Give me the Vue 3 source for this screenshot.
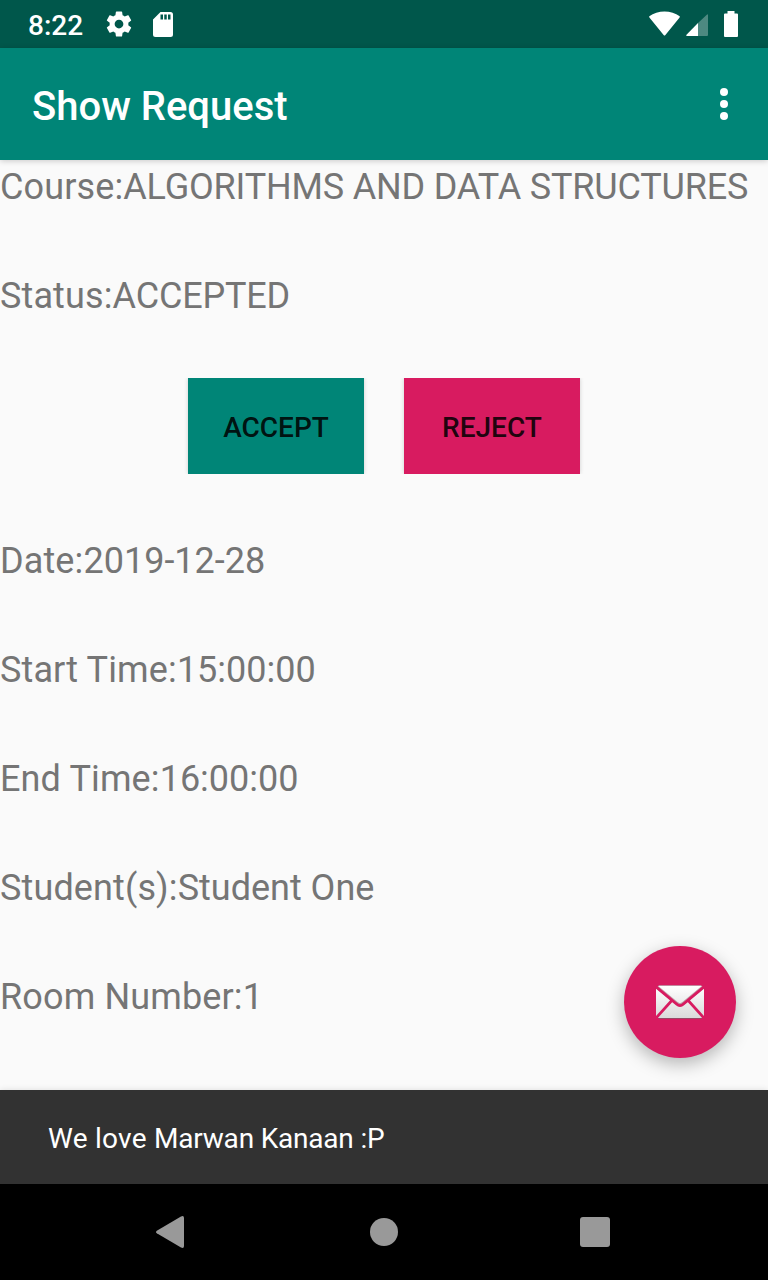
<script setup>
const summary = [
  { label: 'Course:', value: 'ALGORITHMS AND DATA STRUCTURES', caps: true },
  { label: 'Status:', value: 'ACCEPTED', caps: true },
]

const requestDetails = [
  { label: 'Date:', value: '2019-12-28' },
  { label: 'Start Time:', value: '15:00:00' },
  { label: 'End Time:', value: '16:00:00' },
  { label: 'Student(s):', value: 'Student One' },
  { label: 'Room Number:', value: '1' },
]
</script>

<template>
  <div class="screen">
    <header class="status-bar">
      <span class="clock">8:22</span>
      <svg class="gear" width="30" height="30" viewBox="0 0 24 24">
        <path fill="#fff" d="M19.43 12.98c.04-.32.07-.64.07-.98s-.03-.66-.07-.98l2.11-1.65c.19-.15.24-.42.12-.64l-2-3.46c-.12-.22-.39-.3-.61-.22l-2.49 1c-.52-.4-1.08-.73-1.69-.98l-.38-2.65C14.46 2.18 14.25 2 14 2h-4c-.25 0-.46.18-.49.42l-.38 2.65c-.61.25-1.17.59-1.69.98l-2.49-1c-.23-.09-.49 0-.61.22l-2 3.46c-.13.22-.07.49.12.64l2.11 1.65c-.04.32-.07.65-.07.98s.03.66.07.98l-2.11 1.65c-.19.15-.24.42-.12.64l2 3.46c.12.22.39.3.61.22l2.49-1c.52.4 1.08.73 1.69.98l.38 2.65c.03.24.24.42.49.42h4c.25 0 .46-.18.49-.42l.38-2.65c.61-.25 1.17-.59 1.69-.98l2.49 1c.23.09.49 0 .61-.22l2-3.46c.12-.22.07-.49-.12-.64l-2.11-1.65zM12 15.5c-1.93 0-3.5-1.57-3.5-3.5s1.57-3.5 3.5-3.5 3.5 1.57 3.5 3.5-1.57 3.5-3.5 3.5z" />
      </svg>
      <svg class="sd-card" width="20" height="25" viewBox="0 0 20 25">
        <path fill="#fff" fill-rule="evenodd" d="M7.5 0H17.5A2.5 2.5 0 0 1 20 2.5V22.5A2.5 2.5 0 0 1 17.5 25H2.5A2.5 2.5 0 0 1 0 22.5V7.5ZM7.5 2.5V7.5H10V2.5ZM11.25 2.5V7.5H13.75V2.5ZM15 2.5V7.5H17.5V2.5Z" />
      </svg>
      <div class="indicators">
        <svg class="wifi" width="32" height="25" viewBox="0 0 32 25">
          <path fill="#fff" d="M1.3 5.2C9.5-1.1 23.500-1.100 31.700 5.200Q32 6 31.400 6.700L17.400 24Q16.500 25 15.600 24L1.600 6.700Q1 6 1.300 5.200Z" />
        </svg>
        <svg class="signal" width="22" height="22" viewBox="0 0 22 22">
          <path fill="#fff" fill-opacity=".3" d="M12 22H21Q22 22 22 21V1Q22-.5 20.8.7L12 9Z" />
          <path fill="#fff" d="M.5 20.8L12 9V22H.9Q-.3 21.9 .5 20.8Z" />
        </svg>
        <svg class="battery" width="14" height="26" viewBox="0 0 14 26">
          <path fill="#fff" d="M3.500 0H10.500V2.500H13Q14 2.500 14 3.500V25Q14 26 13 26H1Q0 26 0 25V3.500Q0 2.500 1 2.500H3.500Z" />
        </svg>
      </div>
    </header>

    <div class="app-bar">
      <h1>Show Request</h1>
      <svg class="overflow" width="8" height="32" viewBox="0 0 8 32">
        <circle cx="4" cy="4" r="4" fill="#fff" />
        <circle cx="4" cy="16" r="4" fill="#fff" />
        <circle cx="4" cy="28" r="4" fill="#fff" />
      </svg>
    </div>

    <main class="content">
      <p v-for="row in summary" :key="row.label"><span class="label">{{ row.label }}</span><span :class="{ caps: row.caps }">{{ row.value }}</span></p>
      <div class="actions">
        <button class="accept">ACCEPT</button>
        <button class="reject">REJECT</button>
      </div>
      <p v-for="row in requestDetails" :key="row.label"><span class="label">{{ row.label }}</span><span>{{ row.value }}</span></p>

      <button class="fab" aria-label="Email">
        <svg width="48" height="34" viewBox="0 0 48 34">
          <defs>
            <linearGradient id="paper" x1="0" y1="0" x2="0" y2="1">
              <stop offset="0" stop-color="#fff" />
              <stop offset="1" stop-color="#dadada" />
            </linearGradient>
          </defs>
          <rect x="2.5" y="32.6" width="43" height="1.3" fill="#8f5268" />
          <rect x="2.5" y="0" width="43" height="1.2" fill="#c28a9f" />
          <rect x="0" y="1" width="48" height="32" fill="url(#paper)" />
          <path fill="none" stroke="#8f3d58" stroke-width="3.2" d="M0 1.200L20.500 18.200Q24 21.600 27.500 18.200L48 1.200" opacity=".5" />
          <path fill="none" stroke="#d81b60" stroke-width="2.7" d="M0 1.900L20.500 19Q24 22.300 27.500 19L48 1.900M15.800 15.500L.5 32.500M32.200 15.500L47.500 32.500" />
          <path fill="#d81b60" d="M0 0H2.500L0 3.500ZM48 0H45.500L48 3.500ZM0 34V31L2.500 34ZM48 34V31L45.500 34Z" />
        </svg>
      </button>
    </main>

    <div class="snackbar"><span class="opening">We love </span><span class="name">Marwan Kanaan :P</span></div>

    <nav class="nav-bar">
      <svg class="back" width="28" height="32" viewBox="0 0 28 32">
        <path fill="#999" d="M.8 14.700L25 .5Q28-.8 28 2V30Q28 32.800 25 31.500L.8 17.300Q-.8 16 .8 14.700Z" />
      </svg>
      <span class="home"></span>
      <span class="recents"></span>
    </nav>
  </div>
</template>

<style>
body {
  margin: 0;
}
</style>

<style scoped>
.screen {
  width: 768px;
  height: 1280px;
  display: flex;
  flex-direction: column;
  overflow: hidden;
  background: #fafafa;
  font-family: Roboto, sans-serif;
}

.status-bar {
  height: 48px;
  flex: none;
  box-sizing: border-box;
  display: flex;
  align-items: center;
  padding: 0 30px 0 28px;
  background: #00574b;
  color: #fff;
}

.clock {
  width: 76px;
  font-size: 28px;
  font-weight: 500;
  line-height: 34px;
  padding-top: 4px;
}

.sd-card {
  margin: 1px 0 0 19px;
}

.indicators {
  margin-left: auto;
  display: flex;
  align-items: flex-end;
}

.wifi {
  margin-bottom: 1px;
}

.signal {
  margin: 0 16px 1px 6px;
}

.app-bar {
  height: 112px;
  flex: none;
  box-sizing: border-box;
  display: flex;
  align-items: center;
  justify-content: space-between;
  padding: 0 40px 0 32px;
  background: #008577;
  color: #fff;
  box-shadow: 0 1px 6px rgba(0, 0, 0, 0.2);
}

h1 {
  margin: 6px 0 0;
  font-size: 40px;
  font-weight: 500;
  line-height: 48px;
}

.content {
  position: relative;
  height: 930px;
  flex: none;
  display: flex;
  flex-direction: column;
  gap: 60px;
}

p {
  margin: 0;
  height: 49px;
  line-height: 55px;
  font-size: 36px;
  color: #757575;
  white-space: nowrap;
}

.label {
  letter-spacing: 0.13px;
}

.caps {
  letter-spacing: -0.18px;
}

.actions {
  display: flex;
  justify-content: center;
  gap: 40px;
}

button {
  border: 0;
  font-family: inherit;
}

.accept,
.reject {
  width: 176px;
  height: 96px;
  padding: 2px 0 0;
  font-size: 28px;
  font-weight: 500;
  color: rgba(0, 0, 0, 0.87);
  box-shadow: 0 0 4px rgba(0, 0, 0, 0.18);
  clip-path: inset(0 -6px);
}

.accept {
  background: #008577;
}

.reject {
  background: #d81b60;
}

.fab {
  position: absolute;
  right: 32px;
  bottom: 32px;
  width: 112px;
  height: 112px;
  padding: 0;
  display: flex;
  align-items: center;
  justify-content: center;
  border-radius: 50%;
  background: #d81b60;
  box-shadow: 0 6px 18px rgba(0, 0, 0, 0.28);
}

.snackbar {
  position: relative;
  height: 94px;
  flex: none;
  box-sizing: border-box;
  padding-left: 48px;
  background: #323232;
  color: #fff;
  font-size: 28px;
  line-height: 97px;
  box-shadow: 0 0 6px rgba(0, 0, 0, 0.12);
}

.opening {
  letter-spacing: 0.25px;
}

.name {
  letter-spacing: -0.2px;
}

.nav-bar {
  position: relative;
  height: 96px;
  flex: none;
  box-sizing: border-box;
  display: grid;
  grid-template-columns: 214px 210px 30px;
  align-items: center;
  padding-left: 156px;
  background: #000;
}

.home {
  width: 28px;
  height: 28px;
  border-radius: 50%;
  background: #999;
}

.recents {
  width: 30px;
  height: 30px;
  border-radius: 3px;
  background: #999;
}
</style>
